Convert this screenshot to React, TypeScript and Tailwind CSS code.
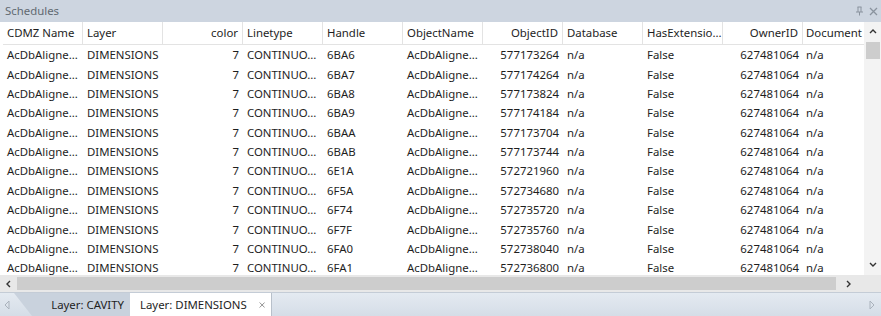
import React from 'react';

// ─── Data ────────────────────────────────────────────────────────────────────

const COLUMNS = [
  { label: 'CDMZ Name', right: false },
  { label: 'Layer', right: false },
  { label: 'color', right: true },
  { label: 'Linetype', right: false },
  { label: 'Handle', right: false },
  { label: 'ObjectName', right: false },
  { label: 'ObjectID', right: true },
  { label: 'Database', right: false },
  { label: 'HasExtensio...', right: false },
  { label: 'OwnerID', right: true },
  { label: 'Document', right: false },
];

const ROWS: [string, string][] = [
  ['6BA6', '577173264'],
  ['6BA7', '577174264'],
  ['6BA8', '577173824'],
  ['6BA9', '577174184'],
  ['6BAA', '577173704'],
  ['6BAB', '577173744'],
  ['6E1A', '572721960'],
  ['6F5A', '572734680'],
  ['6F74', '572735720'],
  ['6F7F', '572735760'],
  ['6FA0', '572738040'],
  ['6FA1', '572736800'],
];

const rowCells = (handle: string, id: string) => [
  'AcDbAligne...',
  'DIMENSIONS',
  '7',
  'CONTINUO...',
  handle,
  'AcDbAligne...',
  id,
  'n/a',
  'False',
  '627481064',
  'n/a',
];

// ─── Small pieces ────────────────────────────────────────────────────────────

function Cell({ text, right, last }: { text: string; right: boolean; last?: boolean }) {
  return (
    <div
      className={`${last ? 'w-[61px] pl-[3px]' : 'w-[80px] px-[4px]'} shrink-0 overflow-hidden whitespace-nowrap ${
        right ? 'text-right' : 'text-left'
      }`}
    >
      {text}
    </div>
  );
}

function Chevron({ dir }: { dir: 'up' | 'down' | 'left' | 'right' }) {
  const d = {
    up: 'M1 5 L4 2 L7 5',
    down: 'M1 2 L4 5 L7 2',
    left: 'M5 1 L2 4 L5 7',
    right: 'M2 1 L5 4 L2 7',
  }[dir];
  return (
    <svg width="8" height="8" viewBox="0 0 8 8" className="shrink-0">
      <path d={d} fill="none" stroke="#333" strokeWidth="1.4" />
    </svg>
  );
}

// ─── App ─────────────────────────────────────────────────────────────────────

export default function App() {
  return (
    <div className="w-[881px] h-[316px] overflow-hidden flex flex-col bg-white text-[11.4px] text-[#1e1e1e] font-['Segoe_UI','Noto_Sans',sans-serif]">
      {/* Title bar */}
      <div className="h-[22px] shrink-0 flex items-center justify-between bg-[#cdd5e0] pl-[5px] pr-[3px]">
        <span className="text-[#616971]">Schedules</span>
        <div className="flex items-center gap-[5px] text-[#8a939e]">
          <svg width="9" height="10" viewBox="0 0 9 10">
            <path d="M2.5 1 H6.5 M3 1 V6 M6 1 V6 M1 6 H8 M4.5 6 V9.5" fill="none" stroke="#8a939e" strokeWidth="1" />
          </svg>
          <svg width="9" height="9" viewBox="0 0 9 9">
            <path d="M1 1 L8 8 M8 1 L1 8" stroke="#8a939e" strokeWidth="1.3" />
          </svg>
        </div>
      </div>

      {/* Grid + vertical scrollbar */}
      <div className="flex h-[253px] shrink-0">
        <div className="w-[864px] flex flex-col pl-[3px] overflow-hidden">
          <div className="h-[23px] shrink-0 flex items-center border-b border-[#e3e3e3]">
            {COLUMNS.map((c, i) => (
              <div
                key={c.label}
                className={`${i === COLUMNS.length - 1 ? 'w-[61px] pl-[3px]' : 'w-[80px] px-[4px] border-r border-[#e3e3e3]'} h-full flex items-center shrink-0 whitespace-nowrap overflow-hidden ${
                  c.right ? 'justify-end' : ''
                }`}
              >
                {c.label}
              </div>
            ))}
          </div>
          <div className="flex-1 overflow-hidden">
            {ROWS.map(([h, id]) => (
              <div key={h} className="h-[19.4px] flex items-center">
                {rowCells(h, id).map((t, i) => (
                  <Cell key={i} text={t} right={COLUMNS[i].right} last={i === COLUMNS.length - 1} />
                ))}
              </div>
            ))}
          </div>
        </div>
        <div className="w-[17px] flex flex-col items-center bg-[#f3f3f3]">
          <div className="h-[20px] flex items-center justify-center">
            <Chevron dir="up" />
          </div>
          <div className="w-[14px] h-[17px] bg-[#cdcdcd]" />
          <div className="flex-1" />
          <div className="h-[20px] flex items-center justify-center">
            <Chevron dir="down" />
          </div>
        </div>
      </div>

      {/* Horizontal scrollbar */}
      <div className="h-[17px] shrink-0 flex items-center bg-[#e8e8e8]">
        <div className="w-[17px] flex justify-center">
          <Chevron dir="left" />
        </div>
        <div className="w-[819px] h-[13px] bg-[#cdcdcd]" />
        <div className="flex-1 flex justify-center pr-[20px]">
          <Chevron dir="right" />
        </div>
      </div>

      {/* Tab strip */}
      <div className="flex-1 flex items-stretch bg-gradient-to-b from-[#e4eaf1] to-[#d5dde7] border-t border-[#c4ccd6] whitespace-nowrap">
        <div className="w-[14px] flex items-center justify-center">
          <svg width="6" height="10" viewBox="0 0 6 10">
            <path d="M5 1 L1 5 L5 9 Z" fill="none" stroke="#aab2bc" strokeWidth="1" />
          </svg>
        </div>
        <div className="flex items-stretch">
          <div className="w-[116px] flex items-center justify-end pr-[6px] bg-[#c9d2dd] [clip-path:polygon(0_0,100%_0,100%_100%,18px_100%)]">
            Layer: CAVITY
          </div>
          <div className="-ml-[4px] w-[146px] flex items-center pl-[14px] pr-[6px] gap-[12px] bg-white border-r border-[#b8c0ca]">
            <span>Layer: DIMENSIONS</span>
            <svg width="10" height="10" viewBox="0 0 10 10">
              <path d="M1 1 L9 9 M9 1 L1 9" stroke="#6d6d6d" strokeWidth="1.2" />
            </svg>
          </div>
        </div>
        <div className="flex-1" />
        <div className="w-[18px] flex items-center justify-center">
          <svg width="6" height="10" viewBox="0 0 6 10">
            <path d="M1 1 L5 5 L1 9 Z" fill="none" stroke="#aab2bc" strokeWidth="1" />
          </svg>
        </div>
      </div>
    </div>
  );
}
